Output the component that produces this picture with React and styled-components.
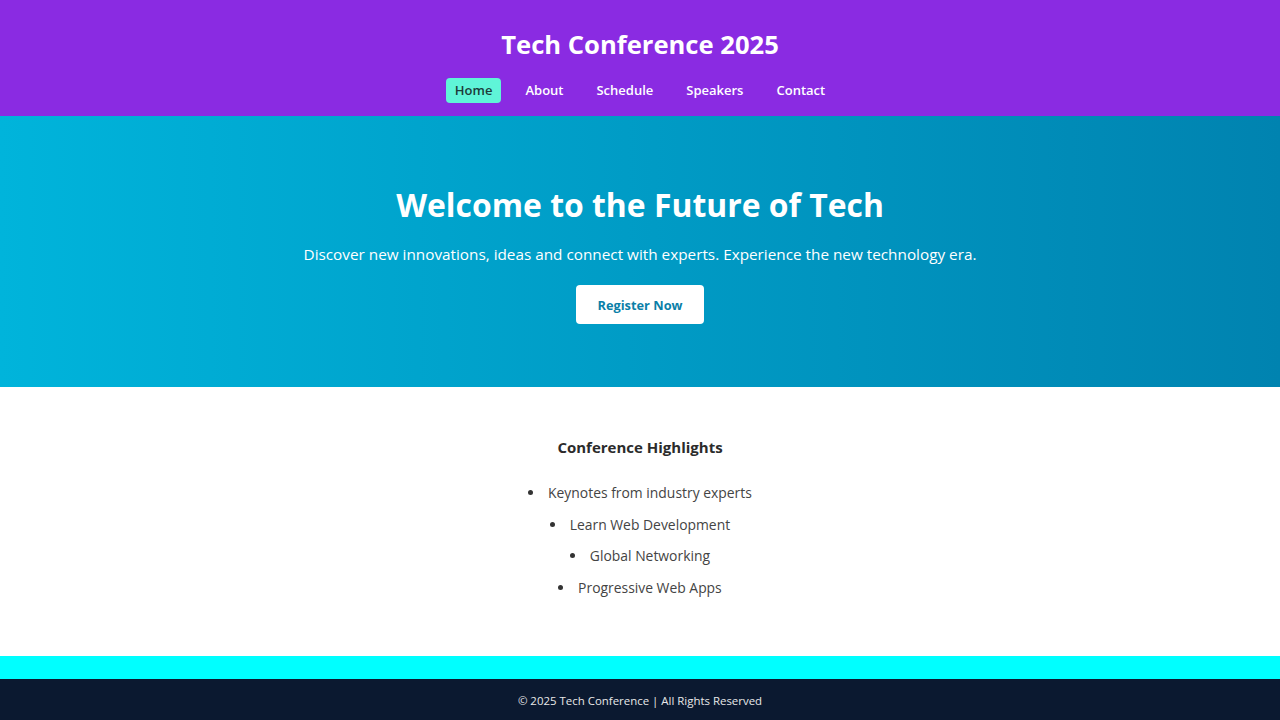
import React from "react";
import styled, { createGlobalStyle } from "styled-components";

const Global = createGlobalStyle`
  html, body { margin: 0; padding: 0; }
  body {
    font-family: "Open Sans", "Noto Sans", sans-serif;
    background: #ffffff;
    color: #333;
  }
  * { box-sizing: border-box; }
`;

const Header = styled.header`
  background: #8a2be2;
  height: 116px;
  display: flex;
  flex-direction: column;
  align-items: center;
  padding-top: 27px;
`;

const SiteTitle = styled.h1`
  margin: 0;
  color: #fff;
  font-size: 25.6px;
  font-weight: 700;
  line-height: 36px;
`;

const Nav = styled.nav`
  display: flex;
  gap: 15px;
  margin-top: 15px;
`;

const NavLink = styled.a`
  display: block;
  padding: 0 9px;
  height: 25px;
  line-height: 25px;
  border-radius: 4px;
  font-size: 13px;
  font-weight: 600;
  text-decoration: none;
  color: ${(p) => (p.$active ? "#1d3b3a" : "#fff")};
  background: ${(p) => (p.$active ? "#5ff5d8" : "transparent")};
`;

const Hero = styled.section`
  height: 271px;
  background: linear-gradient(90deg, #00b4db 0%, #0083b0 100%);
  display: flex;
  flex-direction: column;
  align-items: center;
  padding-top: 64px;
  color: #fff;
`;

const HeroTitle = styled.h2`
  margin: 0;
  font-size: 31.9px;
  font-weight: 700;
  line-height: 50px;
`;

const HeroText = styled.p`
  margin: 12px 0 0;
  font-size: 15.3px;
  line-height: 24px;
`;

const RegisterButton = styled.button`
  margin-top: 19px;
  width: 128px;
  height: 39px;
  border: none;
  border-radius: 4px;
  background: #fff;
  color: #0a7fa8;
  font-family: inherit;
  font-size: 12.8px;
  font-weight: 700;
`;

const Highlights = styled.section`
  height: 269px;
  display: flex;
  flex-direction: column;
  align-items: center;
  padding-top: 47px;
`;

const SectionTitle = styled.h3`
  margin: 0;
  font-size: 15px;
  font-weight: 700;
  line-height: 26px;
  color: #2b2b2b;
`;

const List = styled.ul`
  margin: 17px 0 0;
  padding: 0;
  list-style: disc inside;
  text-align: center;
`;

const Item = styled.li`
  font-size: 13.9px;
  line-height: 31.5px;
  color: #444;
  &::marker { color: #333; }
`;

const Strip = styled.div`
  height: 23px;
  background: #00ffff;
`;

const Footer = styled.footer`
  background: #0b1930;
  color: #e8e8e8;
  height: 41px;
  display: flex;
  align-items: center;
  justify-content: center;
  padding-top: 1px;
  font-size: 11.45px;
`;

export default function App() {
  return (
    <>
      <Global />
      <Header>
        <SiteTitle>Tech Conference 2025</SiteTitle>
        <Nav>
          <NavLink $active href="#">Home</NavLink>
          <NavLink href="#">About</NavLink>
          <NavLink href="#">Schedule</NavLink>
          <NavLink href="#">Speakers</NavLink>
          <NavLink href="#">Contact</NavLink>
        </Nav>
      </Header>
      <Hero>
        <HeroTitle>Welcome to the Future of Tech</HeroTitle>
        <HeroText>
          Discover new innovations, ideas and connect with experts. Experience the new technology era.
        </HeroText>
        <RegisterButton>Register Now</RegisterButton>
      </Hero>
      <Highlights>
        <SectionTitle>Conference Highlights</SectionTitle>
        <List>
          <Item>Keynotes from industry experts</Item>
          <Item>Learn Web Development</Item>
          <Item>Global Networking</Item>
          <Item>Progressive Web Apps</Item>
        </List>
      </Highlights>
      <Strip />
      <Footer>© 2025 Tech Conference | All Rights Reserved</Footer>
    </>
  );
}
